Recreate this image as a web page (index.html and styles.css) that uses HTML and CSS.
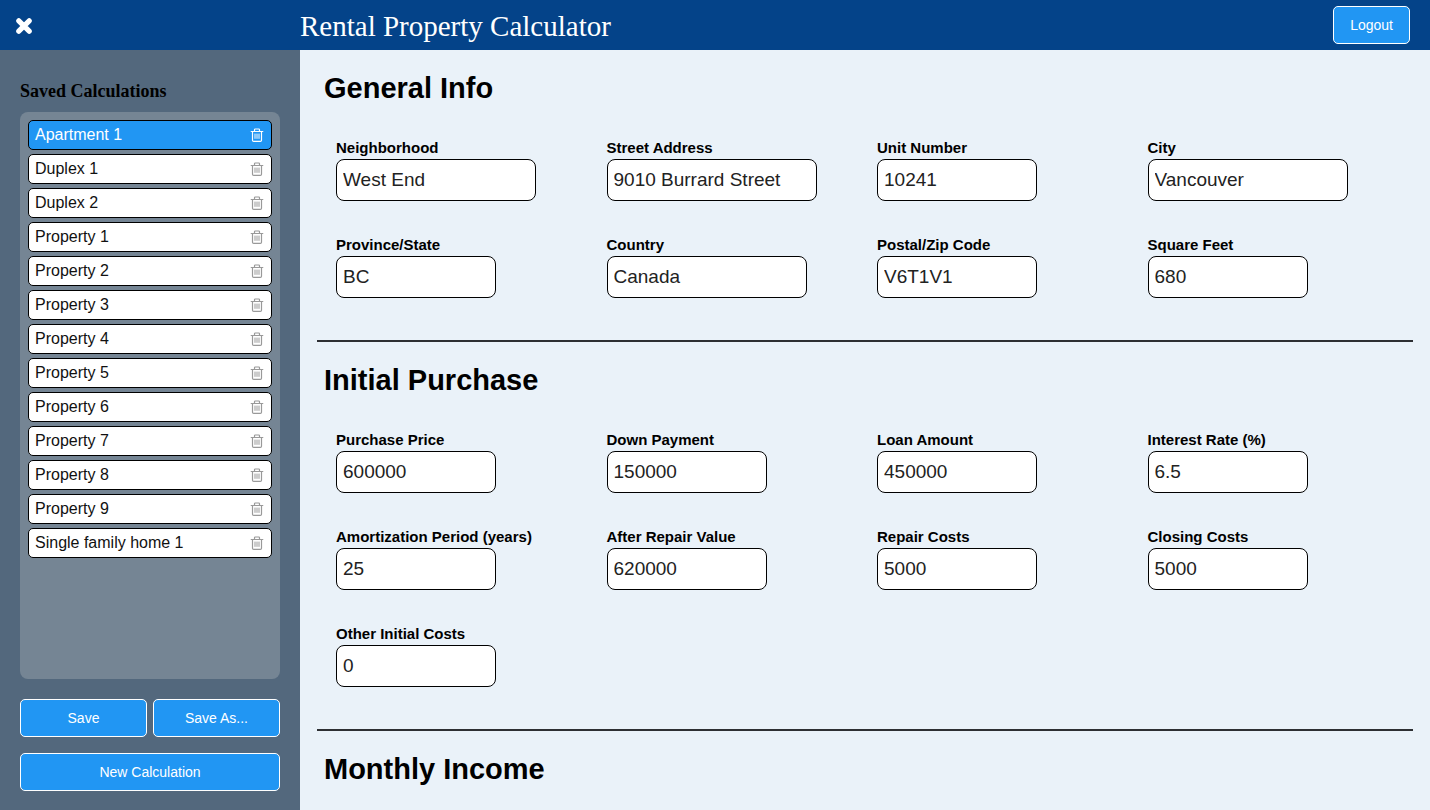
FILE: index.html
```html
<!DOCTYPE html>
<html lang="en">
<head>
<meta charset="utf-8">
<title>Rental Property Calculator</title>
<link rel="stylesheet" href="styles.css">
</head>
<body>
<svg class="sprite" aria-hidden="true">
  <symbol id="trash" viewBox="0 0 14 14">
    <path d="M1.2 3.5h11.6M4.5 3.2V1.8Q4.5 1 5.3 1h3.4Q9.5 1 9.5 1.8v1.4M2.5 3.8v8.4Q2.5 13.4 3.7 13.4h6.6q1.2 0 1.2-1.2V3.8" fill="none" stroke="currentColor" stroke-width="1.2" stroke-linecap="round"/>
    <path d="M5 5.6v5.2M7 5.6v5.2M9 5.6v5.2" stroke="currentColor" stroke-width="1"/>
  </symbol>
</svg>
<header class="topbar">
  <div class="topbar-side">
    <button class="close" type="button" aria-label="Close sidebar">
      <svg class="close-icon" viewBox="0 0 16 16"><path d="M2.8 2.8l10.4 10.4M13.2 2.8L2.8 13.2" stroke="currentColor" stroke-width="5.2" stroke-linecap="round"/></svg>
    </button>
  </div>
  <h1 class="title">Rental Property Calculator</h1>
  <button class="btn logout" type="button">Logout</button>
</header>
<div class="layout">
  <aside class="sidebar">
    <h2 class="sidebar-title">Saved Calculations</h2>
    <ul class="list">
      <li class="item active"><button class="item-name" type="button">Apartment 1</button><button class="del" type="button" aria-label="Delete Apartment 1"><svg class="trash"><use href="#trash"/></svg></button></li>
      <li class="item"><button class="item-name" type="button">Duplex 1</button><button class="del" type="button" aria-label="Delete Duplex 1"><svg class="trash"><use href="#trash"/></svg></button></li>
      <li class="item"><button class="item-name" type="button">Duplex 2</button><button class="del" type="button" aria-label="Delete Duplex 2"><svg class="trash"><use href="#trash"/></svg></button></li>
      <li class="item"><button class="item-name" type="button">Property 1</button><button class="del" type="button" aria-label="Delete Property 1"><svg class="trash"><use href="#trash"/></svg></button></li>
      <li class="item"><button class="item-name" type="button">Property 2</button><button class="del" type="button" aria-label="Delete Property 2"><svg class="trash"><use href="#trash"/></svg></button></li>
      <li class="item"><button class="item-name" type="button">Property 3</button><button class="del" type="button" aria-label="Delete Property 3"><svg class="trash"><use href="#trash"/></svg></button></li>
      <li class="item"><button class="item-name" type="button">Property 4</button><button class="del" type="button" aria-label="Delete Property 4"><svg class="trash"><use href="#trash"/></svg></button></li>
      <li class="item"><button class="item-name" type="button">Property 5</button><button class="del" type="button" aria-label="Delete Property 5"><svg class="trash"><use href="#trash"/></svg></button></li>
      <li class="item"><button class="item-name" type="button">Property 6</button><button class="del" type="button" aria-label="Delete Property 6"><svg class="trash"><use href="#trash"/></svg></button></li>
      <li class="item"><button class="item-name" type="button">Property 7</button><button class="del" type="button" aria-label="Delete Property 7"><svg class="trash"><use href="#trash"/></svg></button></li>
      <li class="item"><button class="item-name" type="button">Property 8</button><button class="del" type="button" aria-label="Delete Property 8"><svg class="trash"><use href="#trash"/></svg></button></li>
      <li class="item"><button class="item-name" type="button">Property 9</button><button class="del" type="button" aria-label="Delete Property 9"><svg class="trash"><use href="#trash"/></svg></button></li>
      <li class="item"><button class="item-name" type="button">Single family home 1</button><button class="del" type="button" aria-label="Delete Single family home 1"><svg class="trash"><use href="#trash"/></svg></button></li>
    </ul>
    <div class="actions">
      <button class="btn" type="button">Save</button>
      <button class="btn" type="button">Save As...</button>
      <button class="btn wide" type="button">New Calculation</button>
    </div>
  </aside>
  <main class="main">
    <section class="section">
      <h2 class="section-title">General Info</h2>
      <div class="fields">
        <div class="field"><label for="neighborhood">Neighborhood</label><input class="medium" id="neighborhood" type="text" value="West End"></div>
        <div class="field"><label for="street">Street Address</label><input class="large" id="street" type="text" value="9010 Burrard Street"></div>
        <div class="field"><label for="unit">Unit Number</label><input id="unit" type="text" value="10241"></div>
        <div class="field"><label for="city">City</label><input class="medium" id="city" type="text" value="Vancouver"></div>
        <div class="field"><label for="province">Province/State</label><input id="province" type="text" value="BC"></div>
        <div class="field"><label for="country">Country</label><input class="medium" id="country" type="text" value="Canada"></div>
        <div class="field"><label for="postal">Postal/Zip Code</label><input id="postal" type="text" value="V6T1V1"></div>
        <div class="field"><label for="sqft">Square Feet</label><input id="sqft" type="text" value="680"></div>
      </div>
    </section>
    <hr class="rule">
    <section class="section">
      <h2 class="section-title">Initial Purchase</h2>
      <div class="fields">
        <div class="field"><label for="price">Purchase Price</label><input id="price" type="text" value="600000"></div>
        <div class="field"><label for="down">Down Payment</label><input id="down" type="text" value="150000"></div>
        <div class="field"><label for="loan">Loan Amount</label><input id="loan" type="text" value="450000"></div>
        <div class="field"><label for="rate">Interest Rate (%)</label><input id="rate" type="text" value="6.5"></div>
        <div class="field"><label for="period">Amortization Period (years)</label><input id="period" type="text" value="25"></div>
        <div class="field"><label for="arv">After Repair Value</label><input id="arv" type="text" value="620000"></div>
        <div class="field"><label for="repair">Repair Costs</label><input id="repair" type="text" value="5000"></div>
        <div class="field"><label for="closing">Closing Costs</label><input id="closing" type="text" value="5000"></div>
        <div class="field"><label for="other">Other Initial Costs</label><input id="other" type="text" value="0"></div>
      </div>
    </section>
    <hr class="rule">
    <section class="section last">
      <h2 class="section-title">Monthly Income</h2>
    </section>
  </main>
</div>
</body>
</html>
```
FILE: styles.css
```css
* { box-sizing: border-box; }

body {
  margin: 0;
  height: 100vh;
  display: flex;
  flex-direction: column;
  font-family: "Liberation Sans", Arial, sans-serif;
  background: #eaf2f9;
  color: #000;
}

button, input { font-family: inherit; }

.sprite { display: none; }

.topbar {
  flex: none;
  display: flex;
  align-items: center;
  height: 50px;
  padding-right: 20px;
  background: #044389;
  color: #fff;
}

.topbar-side {
  width: 300px;
  padding: 2px 0 0 16px;
  display: flex;
}

.close {
  display: flex;
  padding: 0;
  border: 0;
  background: none;
  color: #fff;
  cursor: pointer;
}

.close-icon { width: 16px; height: 16px; }

.title {
  flex: 1;
  margin: 0;
  padding-top: 2px;
  font: 400 29px/34px "Liberation Serif", "Times New Roman", serif;
}

.btn {
  height: 38px;
  padding: 0 16px;
  border: 1px solid #fff;
  border-radius: 5px;
  background: #2196f3;
  color: #fff;
  font-size: 14px;
  cursor: pointer;
}

.layout {
  flex: 1;
  min-height: 0;
  display: flex;
}

.sidebar {
  flex: none;
  width: 300px;
  display: flex;
  flex-direction: column;
  padding: 30px 20px 19px;
  background: #53687d;
}

.sidebar-title {
  margin: 0 0 10px;
  font: 700 18px/22px "Liberation Serif", serif;
}

.list {
  flex: 1;
  min-height: 0;
  overflow-y: auto;
  display: flex;
  flex-direction: column;
  gap: 4px;
  margin: 0 0 20px;
  padding: 8px;
  border-radius: 8px;
  background: #758594;
  list-style: none;
}

.item {
  flex: none;
  display: flex;
  height: 30px;
  border: 1px solid #000;
  border-radius: 5px;
  background: #fff;
  color: #111;
}

.item-name {
  flex: 1;
  padding: 0 6px;
  border: 0;
  background: none;
  color: inherit;
  font-size: 16px;
  text-align: left;
  cursor: pointer;
}

.del {
  display: flex;
  align-items: center;
  padding: 0 7px;
  border: 0;
  background: none;
  color: #999;
  cursor: pointer;
}

.trash { width: 14px; height: 14px; }

.active { background: #2196f3; color: #fff; }
.active .del { color: #fff; }

.actions {
  display: grid;
  grid-template-columns: 1fr 1fr;
  gap: 16px 6px;
}

.wide { grid-column: 1 / -1; }

.main {
  flex: 1;
  min-width: 0;
  overflow-y: auto;
}

.section { padding: 21px 24px 42px; }
.last { padding-bottom: 0; }

.section-title {
  margin: 0;
  font-size: 29px;
  line-height: 34px;
}

.fields {
  display: grid;
  grid-template-columns: repeat(4, 1fr);
  row-gap: 37px;
  margin-top: 36px;
}

.field {
  display: flex;
  flex-direction: column;
  align-items: flex-start;
  padding-left: 12px;
}

.field label {
  font-size: 15px;
  font-weight: 700;
  line-height: 14px;
  padding-bottom: 4px;
}

.field input {
  width: 160px;
  height: 42px;
  padding: 0 6px;
  border: 1px solid #000;
  border-radius: 8px;
  background: #fff;
  color: #222;
  font-size: 19px;
}

.field .medium { width: 200px; }
.field .large { width: 210px; }

.rule {
  height: 2px;
  margin: 0 17px;
  border: 0;
  background: #2d2f33;
}
```
